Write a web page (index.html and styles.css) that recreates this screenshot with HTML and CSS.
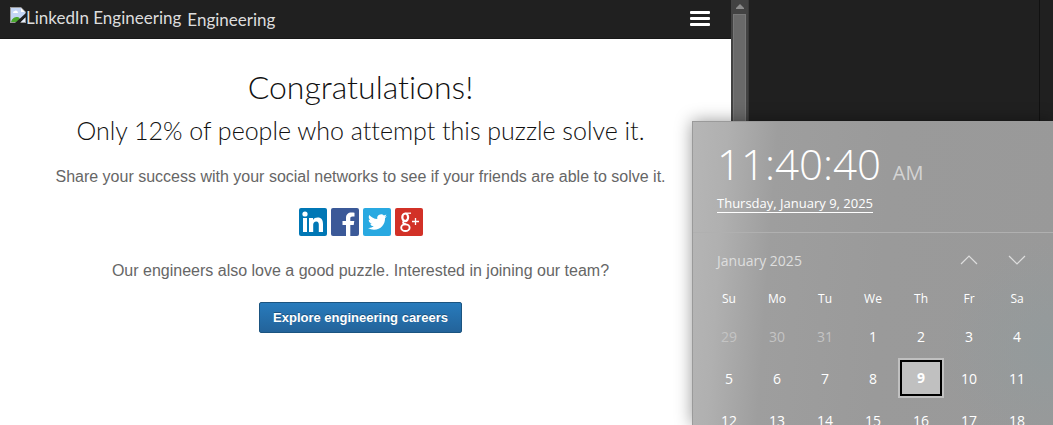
FILE: index.html
```html
<!DOCTYPE html>
<html lang="en">
<head>
<meta charset="utf-8">
<title>Engineering puzzle</title>
<link rel="stylesheet" href="styles.css">
</head>
<body>
<div class="screen">
  <div class="page">
    <header class="topbar">
      <a class="brand" href="#">
        <svg class="broken" width="16" height="16" viewBox="0 0 16 16" aria-hidden="true">
          <path d="M0 0h11l5 5v11H0z" fill="#9a9a9a"/>
          <path d="M1 1h10v4h4v10H1z" fill="#c4d6f6"/>
          <path d="M11 1l4 4h-4z" fill="#fff"/>
          <path d="M3 6c0-2 2-2 2-2 1-1 3 0 3 2z" fill="#fff"/>
          <path d="M1 15c1-4 4-5 6-5s3 1 4 5z" fill="#4ba82e"/>
          <path d="M16 6v4l-6 6H5z" fill="#202020"/>
          <path d="M15 11v4h-4z" fill="#e8eefa"/>
        </svg>
        <span>LinkedIn Engineering</span>
        <span class="brand-name">Engineering</span>
      </a>
      <button class="menu" type="button" aria-label="Menu"><i></i><i></i><i></i></button>
    </header>
    <main class="content">
      <h1>Congratulations!</h1>
      <h2>Only 12% of people who attempt this puzzle solve it.</h2>
      <p>Share your success with your social networks to see if your friends are able to solve it.</p>
      <nav class="social">
        <a href="#" aria-label="LinkedIn"><svg width="28" height="28" viewBox="0 0 28 28"><rect width="28" height="28" rx="2" fill="#0077b5"/><g fill="#fff"><circle cx="6" cy="6" r="2.600"/><path d="M4 10h4v14H4zM10 10h4v2c1-1.600 2.600-2.400 4.600-2.400 4 0 5.400 2.500 5.400 6.400v8h-4.200v-7.300c0-2-.6-3.300-2.500-3.300-2 0-3.100 1.400-3.100 3.400V24H10z"/></g></svg></a>
        <a href="#" aria-label="Facebook"><svg width="28" height="28" viewBox="0 0 28 28"><rect width="28" height="28" rx="2" fill="#3b5998"/><path fill="#fff" d="M15 28V17h-3.500v-4H15v-3c0-3.600 2.200-5.500 5.400-5.500 1.500 0 2.600.1 3.100.2v3.700h-2c-1.700 0-2.200.9-2.200 2.200V13h4l-.6 4h-3.400v11z"/></svg></a>
        <a href="#" aria-label="Twitter"><svg width="28" height="28" viewBox="0 0 28 28"><rect width="28" height="28" rx="2" fill="#29a9e1"/><path fill="#fff" transform="translate(5 4.500) scale(.79)" d="M23.950 4.570a10 10 0 0 1-2.820.77 4.960 4.960 0 0 0 2.160-2.720c-.95.550-2 .95-3.130 1.180a4.920 4.920 0 0 0-8.380 4.480C7.690 8.090 4.070 6.130 1.640 3.160a4.820 4.820 0 0 0-.67 2.480c0 1.710.87 3.210 2.190 4.100a4.900 4.900 0 0 1-2.230-.62v.06a4.920 4.920 0 0 0 3.950 4.830 5 5 0 0 1-2.210.08 4.940 4.940 0 0 0 4.600 3.420A9.870 9.870 0 0 1 0 19.540a14 14 0 0 0 7.550 2.210c9.050 0 14-7.500 14-13.980l-.02-.64a9.900 9.900 0 0 0 2.420-2.560z"/></svg></a>
        <a href="#" aria-label="Google Plus"><svg width="28" height="28" viewBox="0 0 28 28"><rect width="28" height="28" rx="2" fill="#d23127"/><g fill="none" stroke="#fff"><ellipse cx="10.200" cy="9.300" rx="2.900" ry="3.800" stroke-width="2.200"/><path d="M10.500 5.200h5.500" stroke-width="1.300"/><path d="M9 13.300c-2 1.500-.5 2.300 2 3" stroke-width="1.800"/><ellipse cx="10.400" cy="19.700" rx="4.200" ry="3.300" stroke-width="1.900"/><path d="M20.500 10v7M17 13.500h7" stroke-width="1.300"/></g></svg></a>
      </nav>
      <p>Our engineers also love a good puzzle. Interested in joining our team?</p>
      <a class="cta" href="#">Explore engineering careers</a>
    </main>
  </div>
  <div class="scrollbar" aria-hidden="true">
    <svg width="8" height="5" viewBox="0 0 8 5"><path d="M4 0l4 4v1H0V4z" fill="#8c8c8c"/></svg>
    <div class="thumb"></div>
  </div>
  <div class="backdrop"><div class="divider"></div></div>

  <section class="flyout" aria-label="Clock and calendar">
    <div class="clock">
      <div class="time"><span class="digits">11:40:40</span><span class="ampm">AM</span></div>
      <a class="date" href="#">Thursday, January 9, 2025</a>
    </div>
    <div class="month">
      <span class="month-name">January 2025</span>
      <button type="button" aria-label="Previous month"><svg width="18" height="10" viewBox="0 0 18 10"><path d="M1 9l8-8 8 8"/></svg></button>
      <button type="button" aria-label="Next month"><svg width="18" height="10" viewBox="0 0 18 10"><path d="M1 1l8 8 8-8"/></svg></button>
    </div>
    <table class="days">
      <thead><tr><th>Su</th><th>Mo</th><th>Tu</th><th>We</th><th>Th</th><th>Fr</th><th>Sa</th></tr></thead>
      <tbody>
        <tr><td class="other">29</td><td class="other">30</td><td class="other">31</td><td>1</td><td>2</td><td>3</td><td>4</td></tr>
        <tr><td>5</td><td>6</td><td>7</td><td>8</td><td><span class="today">9</span></td><td>10</td><td>11</td></tr>
        <tr><td>12</td><td>13</td><td>14</td><td>15</td><td>16</td><td>17</td><td>18</td></tr>
      </tbody>
    </table>
  </section>
</div>
</body>
</html>
```
FILE: styles.css
```css
* { box-sizing: border-box; }
body { margin: 0; background: #fff; }
button { border: 0; background: none; padding: 0; }

.screen {
  position: relative;
  display: grid;
  grid-template-columns: minmax(0, 731fr) 18px minmax(0, 304fr);
  height: 100vh;
  overflow: hidden;
}

.topbar {
  display: flex;
  justify-content: space-between;
  align-items: flex-start;
  height: 39px;
  padding: 7px 21px 0 10px;
  background: #202020;
  border-bottom: 1px solid #181818;
}
.brand {
  display: flex;
  color: #ddd;
  font: 400 17px/22px Lato, sans-serif;
  text-decoration: none;
  white-space: nowrap;
}
.brand-name { padding: 2px 0 0 6px; }
.menu {
  display: flex;
  flex-direction: column;
  gap: 3px;
  width: 20px;
  padding-top: 4px;
}
.menu i { height: 3px; border-radius: 1px; background: #fff; }

.content {
  display: flex;
  flex-direction: column;
  align-items: center;
  padding: 28px 10px 0 0;
  text-align: center;
}
h1, h2 {
  margin: 0;
  color: #111;
  font-family: Lato, sans-serif;
  font-weight: 300;
  font-variant-ligatures: none;
}
h1 { font-size: 32px; line-height: 40px; }
h2 { padding-top: 7px; font-size: 25px; line-height: 32px; }
p {
  margin: 21px 0 20px;
  color: #666;
  font: 16px/20px "Liberation Sans", Arial, sans-serif;
}
.social { display: flex; gap: 4px; padding-top: 1px; }
.social svg { display: block; }
.social + p { margin: 25px 0 21px; }
.cta {
  padding: 0 13px;
  border: 1px solid #1b5480;
  border-radius: 2px;
  background: linear-gradient(#287bbc, #23639a);
  color: #fff;
  font: bold 13px/29px "Liberation Sans", Arial, sans-serif;
  text-decoration: none;
  text-shadow: 0 -1px 0 rgba(0, 0, 0, .3);
}

.scrollbar {
  display: flex;
  flex-direction: column;
  align-items: center;
  gap: 5px;
  padding: 4px 2px 0;
  background: #424242;
  border-right: 1px solid #383838;
}
.thumb { flex: 1; width: 13px; background: #696969; border: 1px solid #777; }
.backdrop {
  display: flex;
  justify-content: flex-end;
  padding-right: 13px;
  background: #202020;
}
.divider { width: 1px; background: #111; }

.flyout {
  position: absolute;
  top: 121px;
  right: 0;
  bottom: 0;
  width: 361px;
  overflow: hidden;
  border: solid #9a9a9a;
  border-width: 1px 0 0 1px;
  background:
    radial-gradient(circle at 100% 75%, rgba(145, 155, 157, .7), transparent 110px),
    linear-gradient(94deg, #b6b6b6, #b0b0b0 35px, #9e9e9e 85px, #9a9a9a 200px, #999);
  box-shadow: 0 0 16px rgba(0, 0, 0, .4);
  color: #fff;
  font-family: "Open Sans", "Noto Sans", sans-serif;
}
.clock {
  height: 111px;
  padding: 14px 24px 0;
  border-bottom: 1px solid #b0b0b0;
}
.time { display: flex; align-items: baseline; gap: 12px; height: 55px; }
.digits { font-size: 42px; font-weight: 300; line-height: 56px; }
.ampm { color: #d4d4d4; font-size: 20px; }
.date {
  display: inline-block;
  border-bottom: 1px solid #fff;
  color: #fff;
  font-size: 13px;
  line-height: 18px;
  text-decoration: none;
}
.month { display: flex; align-items: center; height: 54px; padding: 0 12px 0 24px; }
.month-name { flex: 1; color: #dedede; font-size: 14px; }
.month button { width: 48px; height: 32px; }
.month path { fill: none; stroke: #ddd; stroke-width: 1.2; }
.days {
  width: calc(100% - 24px);
  margin-left: 12px;
  border-collapse: collapse;
  table-layout: fixed;
}
th, td { padding: 0; text-align: center; }
th { height: 28px; padding-bottom: 4px; font-size: 12px; font-weight: 400; line-height: 18px; }
td { height: 42px; font-size: 14px; }
.other { color: #c4c4c4; }
.today {
  display: block;
  width: 42px;
  margin: 0 auto;
  border: 2px solid #000;
  outline: 2px solid #c0c0c0;
  background: #c0c0c0;
  font-weight: 700;
  line-height: 32px;
}
```
